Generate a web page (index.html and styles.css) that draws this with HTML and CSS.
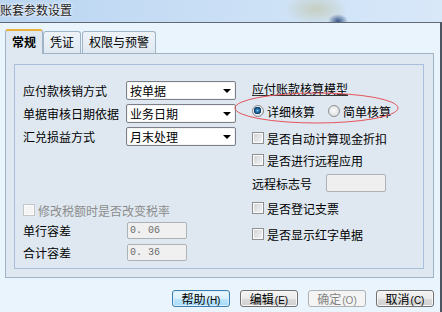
FILE: index.html
```html
<!DOCTYPE html>
<html lang="zh-CN">
<head>
    <meta charset="UTF-8">
    <title>账套参数设置</title>
    <link rel="stylesheet" href="styles.css">
</head>
<body>
    <div class="titlebar"><span class="title">账套参数设置</span></div>
    <div class="window">
        <div class="tabs">
            <div class="tab active">常规</div>
            <div class="tab">凭证</div>
            <div class="tab">权限与预警</div>
        </div>
        <div class="panel">
            <div class="group">
                <div class="col-left">
                    <div class="field">
                        <span class="label">应付款核销方式</span>
                        <div class="select">按单据<span class="arrow"></span></div>
                    </div>
                    <div class="field">
                        <span class="label">单据审核日期依据</span>
                        <div class="select">业务日期<span class="arrow"></span></div>
                    </div>
                    <div class="field">
                        <span class="label">汇兑损益方式</span>
                        <div class="select">月末处理<span class="arrow"></span></div>
                    </div>
                    <div class="check disabled tax-row"><span class="box"></span>修改税额时是否改变税率</div>
                    <div class="field small">
                        <span class="label">单行容差</span>
                        <div class="input">0. 06</div>
                    </div>
                    <div class="field small">
                        <span class="label">合计容差</span>
                        <div class="input">0. 36</div>
                    </div>
                </div>
                <div class="col-right">
                    <div class="model-title"><span>应付账款核算模型</span></div>
                    <div class="radios">
                        <div class="radio"><span class="dot on"></span>详细核算</div>
                        <div class="radio"><span class="dot"></span>简单核算</div>
                    </div>
                    <div class="check first"><span class="box"></span>是否自动计算现金折扣</div>
                    <div class="check"><span class="box"></span>是否进行远程应用</div>
                    <div class="remote">
                        <span class="remote-label">远程标志号</span>
                        <div class="input blank"></div>
                    </div>
                    <div class="check cheque"><span class="box"></span>是否登记支票</div>
                    <div class="check red"><span class="box"></span>是否显示红字单据</div>
                </div>
                <svg class="mark" width="408" height="203">
                    <ellipse cx="301.5" cy="43" rx="81.5" ry="15" fill="none" stroke="#e4545a" stroke-width="1"/>
                </svg>
            </div>
        </div>
        <div class="buttons">
            <div class="btn focus">帮助<span class="key">(H)</span></div>
            <div class="btn">编辑<span class="key">(E)</span></div>
            <div class="btn off">确定<span class="key">(O)</span></div>
            <div class="btn">取消<span class="key">(C)</span></div>
        </div>
    </div>
</body>
</html>
```

FILE: styles.css
```css
body {
    margin: 0;
    width: 442px;
    height: 312px;
    overflow: hidden;
    font-family: "Noto Sans CJK SC", "Liberation Sans", sans-serif;
    font-size: 12px;
    color: #000;
    background-color: #eaf4fd;
}
.titlebar {
    height: 22px;
    line-height: 19px;
    color: #1b1b1b;
    background:
        radial-gradient(ellipse 10px 7px at 338px 21px, rgba(40,70,120,0.9), rgba(40,70,120,0)),
        radial-gradient(ellipse 32px 16px at 316px 9px, rgba(196,205,190,0.95), rgba(196,205,190,0)),
        linear-gradient(to right, #bad5f1, #cde1f6 60%, #d8e8f9);
}
.title {
    text-shadow: 0 0 4px #fff, 0 0 2px #fff;
}
.window {
    height: 289px;
    border-top: 1px solid #5f6874;
    border-right: 2px solid #4b5562;
    background-color: #eaf4fd;
}
.tabs {
    display: flex;
    align-items: flex-end;
    height: 30px;
    padding-left: 5px;
}
.tab {
    height: 22px;
    box-sizing: border-box;
    border: 1px solid #a0b4c8;
    border-bottom: none;
    border-radius: 3px 3px 0 0;
    padding: 0 6px;
    line-height: 20px;
    background: linear-gradient(#eef3f9, #dfe8f1);
}
.tab:last-child {
    margin-left: 1px;
}
.tab.active {
    position: relative;
    height: 25px;
    margin-bottom: -1px;
    border-top: 2px solid #e8b23c;
    background: #dfe8f1;
    font-weight: bold;
    line-height: 21px;
}
.panel {
    height: 225px;
    box-sizing: border-box;
    margin: 0 6px 0 5px;
    padding: 10px 9px 8px 8px;
    border: 1px solid #9fb3c7;
    background-color: #dfe8f1;
}
.group {
    position: relative;
    height: 205px;
    box-sizing: border-box;
    border: 1px solid #a8c0dd;
    padding: 14px 0 0 8px;
    display: grid;
    grid-template-columns: 229px 1fr;
    align-items: start;
}
.field {
    display: flex;
    align-items: center;
    height: 23px;
}
.field.small {
    height: 21px;
    margin-bottom: 1px;
}
.label {
    width: 103px;
    flex: none;
}
.select {
    width: 110px;
    height: 19px;
    box-sizing: border-box;
    border: 1px solid #7c8088;
    border-radius: 2px;
    background-color: #fff;
    box-shadow: inset 0 0 0 1px #f3f3f3;
    display: flex;
    align-items: center;
    justify-content: space-between;
    padding: 0 4px 0 3px;
    line-height: 17px;
}
.arrow {
    width: 0;
    height: 0;
    border-left: 4px solid transparent;
    border-right: 4px solid transparent;
    border-top: 4px solid #000;
}
.input {
    width: 60px;
    height: 17px;
    box-sizing: border-box;
    margin-left: 1px;
    border: 1px solid #adb2b5;
    border-radius: 2px;
    background-color: #f0f0f0;
    color: #6d6d6d;
    font-family: "Liberation Mono", monospace;
    font-size: 10px;
    line-height: 15px;
    padding-left: 2px;
}
.input.blank {
    height: 18px;
    margin-left: 0;
    background-color: #efefef;
}
.check {
    display: flex;
    align-items: center;
    height: 22px;
}
.box {
    width: 12px;
    height: 12px;
    box-sizing: border-box;
    flex: none;
    margin-right: 3px;
    border: 1px solid #8e8f8f;
    background: linear-gradient(135deg, #cdd1d5, #f7f7f7);
    box-shadow: inset 0 0 0 1px #fbfbfb;
}
.check.disabled {
    color: #8c8c8c;
}
.check.disabled .box {
    border-color: #c3c5c7;
    background: #f4f4f4;
}
.tax-row {
    height: 20px;
    margin-top: 52px;
}
.model-title {
    display: flex;
    align-items: center;
    height: 18px;
    margin-top: 1px;
}
.model-title span {
    display: inline-block;
    line-height: 12px;
    border-bottom: 1px solid #333;
}
.radios {
    display: flex;
    align-items: center;
    height: 26px;
}
.radio {
    display: flex;
    align-items: center;
    margin-right: 13px;
}
.dot {
    width: 12px;
    height: 12px;
    box-sizing: border-box;
    margin-right: 3px;
    border: 1px solid #8e8f8f;
    border-radius: 50%;
    background: radial-gradient(circle at 45% 45%, #fdfdfd, #d2d4d6);
}
.dot.on {
    background: radial-gradient(circle at 45% 45%, #8fd0f2 0, #2272ad 1.5px, #0d3e6a 3.5px, #eef0f2 4px, #d0d3d6 6px);
}
.check.first {
    margin-top: 3px;
}
.remote {
    display: flex;
    align-items: center;
    height: 24px;
}
.remote-label {
    width: 74px;
}
.check.cheque {
    margin-top: 2px;
}
.check.red {
    margin-top: 4px;
}
.mark {
    position: absolute;
    left: 0;
    top: 0;
    pointer-events: none;
}
.buttons {
    display: flex;
    justify-content: flex-end;
    gap: 10px;
    margin-top: 12px;
    padding-right: 6px;
}
.btn {
    width: 58px;
    height: 17px;
    box-sizing: border-box;
    border: 1px solid #707070;
    border-radius: 3px;
    background: linear-gradient(#f3f3f3 0, #ebebeb 50%, #dddddd 51%, #cfcfcf 100%);
    box-shadow: inset 0 0 0 1px #f8f8f8;
    text-align: center;
    line-height: 15px;
}
.key {
    font-family: "Liberation Sans", sans-serif;
    font-size: 10px;
    margin-left: 1px;
}
.btn.focus {
    border-color: #3c7fb1;
    background: linear-gradient(#eaf6fd 0, #d9f0fc 50%, #bee6fd 51%, #a7d9f5 100%);
    box-shadow: inset 0 0 0 1px #d8eefb;
}
.btn.off {
    border-color: #adb2b5;
    background: #f4f4f4;
    box-shadow: none;
    color: #838383;
}
```
